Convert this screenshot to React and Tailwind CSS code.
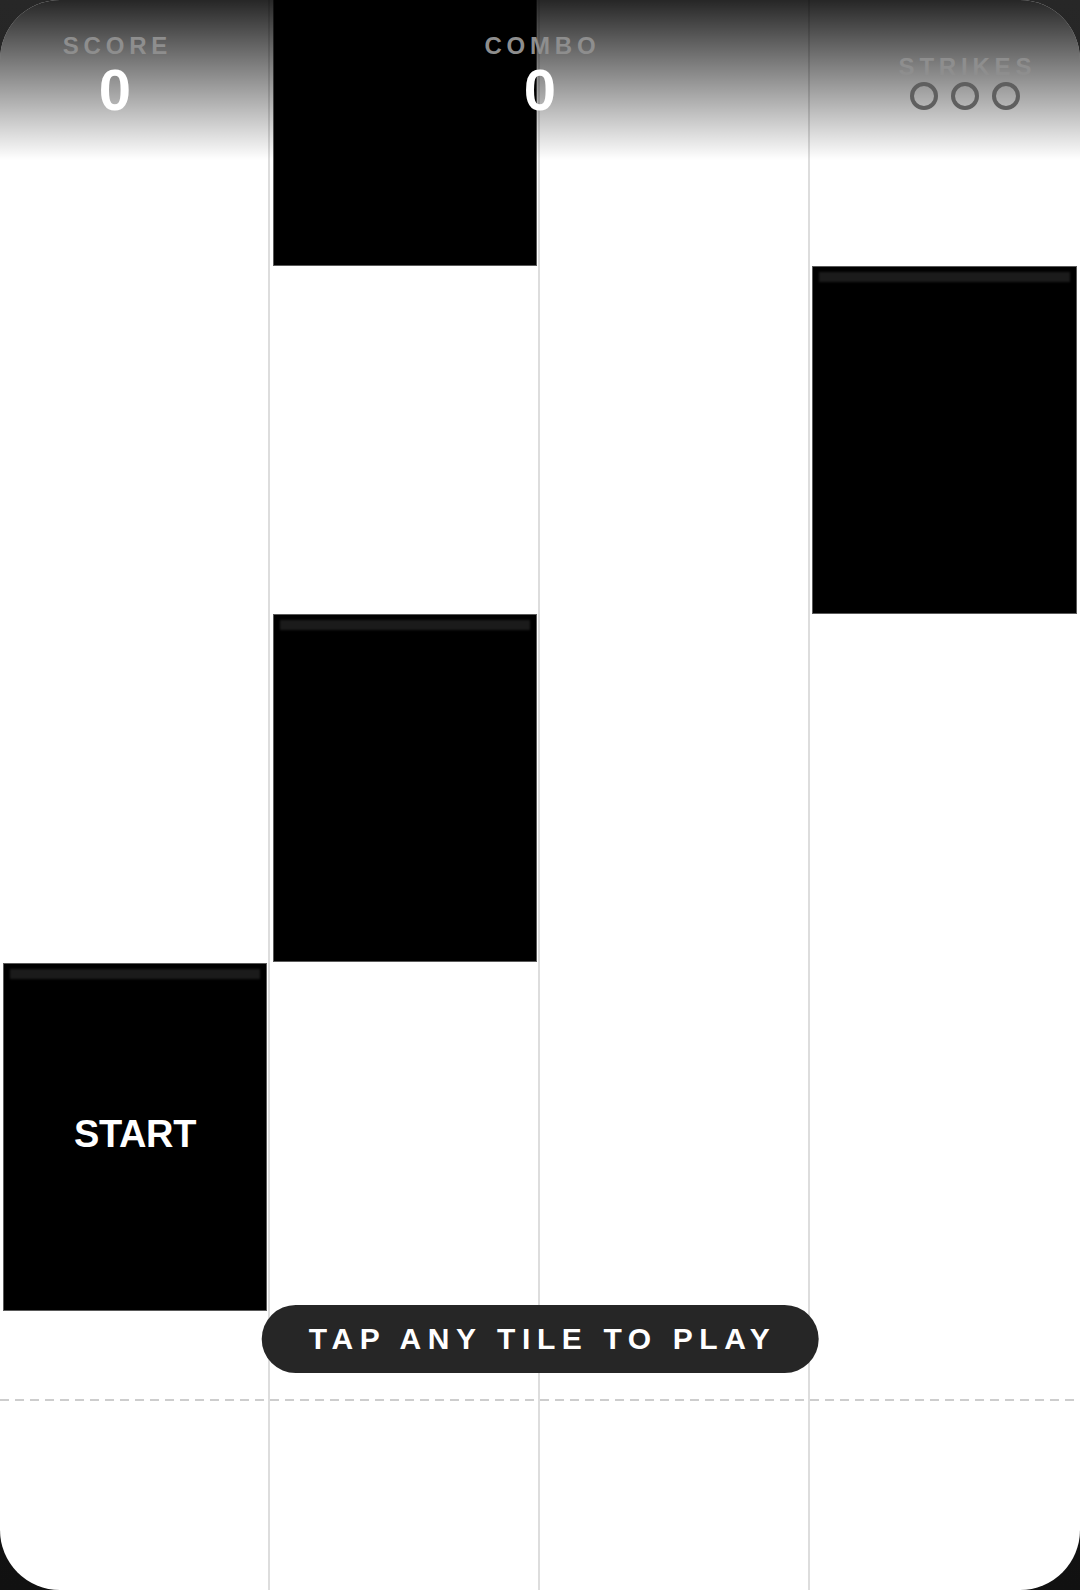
import React from "react";

function Tile({ top, side = "left-[3px] right-[1px]", label }) {
  return (
    <div className={`absolute h-[348px] bg-black border border-[#5a5a5a] ${side} ${top}`}>
      <div className="absolute top-[5px] left-[6px] right-[6px] h-[10px] bg-[#1b1b1b] blur-[1px]" />
      {label && (
        <div className="absolute inset-0 flex items-center justify-center pb-[6px] text-white text-[38px] font-bold tracking-[-0.01em] leading-none">
          {label}
        </div>
      )}
    </div>
  );
}

function Stat({ label, value }) {
  return (
    <div className="w-[140px] flex flex-col items-center">
      <div className="text-[24px] leading-none font-bold tracking-[0.2em] pl-[0.2em] text-[#8e8e8e]">{label}</div>
      <div className="mt-[3px] text-[58px] leading-none font-bold text-white">{value}</div>
    </div>
  );
}

export default function App() {
  return (
    <div className="w-[1080px] h-[1590px] bg-gradient-to-b from-[#272727] to-[#111111] font-['Liberation_Sans',Arial,sans-serif]">
      <div className="relative w-full h-full rounded-[60px] overflow-hidden bg-white">
        <div className="grid grid-cols-4 h-full">
          <div className="relative h-full border-r-2 border-[#dddddd]">
            <Tile top="top-[963px]" label="START" />
          </div>
          <div className="relative h-full border-r-2 border-[#dddddd]">
            <Tile top="top-[-82px]" />
            <Tile top="top-[614px]" />
          </div>
          <div className="relative h-full border-r-2 border-[#dddddd]" />
          <div className="relative h-full">
            <Tile top="top-[266px]" side="left-[2px] right-[3px]" />
          </div>
        </div>

        <div className="absolute left-0 right-0 top-[1399px] h-[2px] bg-[repeating-linear-gradient(90deg,#cdcdcd_0px,#cdcdcd_9px,transparent_9px,transparent_15px)]" />

        <div className="absolute top-0 left-0 right-0 h-[160px] bg-gradient-to-b from-[rgba(0,0,0,0.85)] to-transparent">
          <div className="flex justify-between items-start pt-[34px] pl-[45px] pr-[45px]">
            <Stat label="SCORE" value="0" />
            <Stat label="COMBO" value="0" />
            <div className="w-[140px] flex flex-col items-center mt-[21px]">
              <div className="text-[24px] leading-none font-bold tracking-[0.2em] pl-[0.2em] text-[#8e8e8e]">STRIKES</div>
              <div className="mt-[3px] flex gap-[13px]">
                <div className="w-[28px] h-[28px] rounded-full border-4 border-[#5f5f5f]" />
                <div className="w-[28px] h-[28px] rounded-full border-4 border-[#5f5f5f]" />
                <div className="w-[28px] h-[28px] rounded-full border-4 border-[#5f5f5f]" />
              </div>
            </div>
          </div>
        </div>

        <div className="absolute top-[1305px] left-1/2 -translate-x-1/2 h-[68px] pl-[47px] pr-[42px] rounded-full bg-[#262626] flex items-center whitespace-nowrap text-white text-[30px] font-bold tracking-[0.22em] leading-none">
          TAP ANY TILE TO PLAY
        </div>
      </div>
    </div>
  );
}
